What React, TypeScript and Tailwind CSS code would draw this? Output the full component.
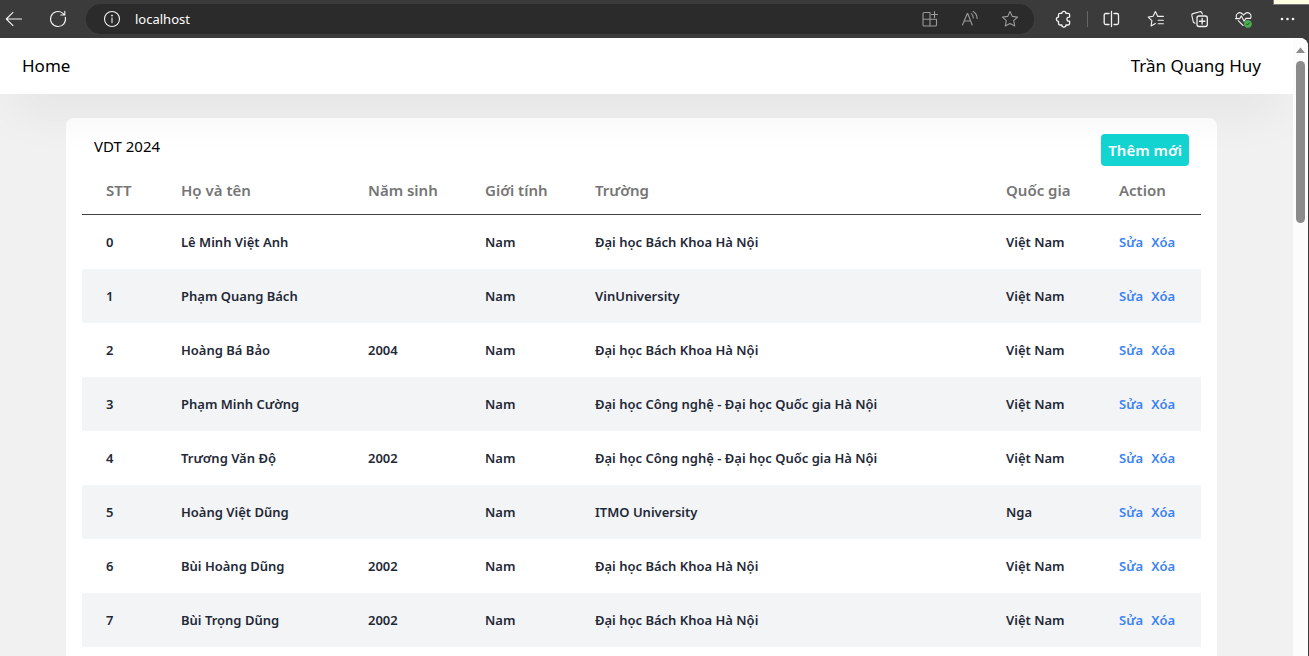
import React, { useState } from "react";

type Student = {
  id: number;
  name: string;
  year: string;
  gender: string;
  school: string;
  country: string;
};

const BK = "Đại học Bách Khoa Hà Nội";
const CN = "Đại học Công nghệ - Đại học Quốc gia Hà Nội";

const students: Student[] = [
  { id: 0, name: "Lê Minh Việt Anh", year: "", gender: "Nam", school: BK, country: "Việt Nam" },
  { id: 1, name: "Phạm Quang Bách", year: "", gender: "Nam", school: "VinUniversity", country: "Việt Nam" },
  { id: 2, name: "Hoàng Bá Bảo", year: "2004", gender: "Nam", school: BK, country: "Việt Nam" },
  { id: 3, name: "Phạm Minh Cường", year: "", gender: "Nam", school: CN, country: "Việt Nam" },
  { id: 4, name: "Trương Văn Độ", year: "2002", gender: "Nam", school: CN, country: "Việt Nam" },
  { id: 5, name: "Hoàng Việt Dũng", year: "", gender: "Nam", school: "ITMO University", country: "Nga" },
  { id: 6, name: "Bùi Hoàng Dũng", year: "2002", gender: "Nam", school: BK, country: "Việt Nam" },
  { id: 7, name: "Bùi Trọng Dũng", year: "2002", gender: "Nam", school: BK, country: "Việt Nam" },
];

const columns = [
  { label: "STT", width: "w-[75px]" },
  { label: "Họ và tên", width: "w-[187px]" },
  { label: "Năm sinh", width: "w-[117px]" },
  { label: "Giới tính", width: "w-[110px]" },
  { label: "Trường", width: "" },
  { label: "Quốc gia", width: "w-[113px]" },
  { label: "Action", width: "w-[106px]" },
];

function Icon({ children }: { children: React.ReactNode }) {
  return (
    <svg
      width="18"
      height="18"
      viewBox="0 0 18 18"
      fill="none"
      stroke="currentColor"
      strokeWidth="1.1"
      strokeLinecap="round"
      strokeLinejoin="round"
      aria-hidden="true"
      className="shrink-0"
    >
      {children}
    </svg>
  );
}

function ToolButton({ label, className, children }: { label: string; className: string; children: React.ReactNode }) {
  return (
    <button type="button" aria-label={label} className={`flex h-full shrink-0 items-center justify-center ${className}`}>
      <Icon>{children}</Icon>
    </button>
  );
}

function BrowserBar() {
  const [address, setAddress] = useState("localhost");
  return (
    <header className="relative flex h-[38px] shrink-0 items-center bg-[#3b3b3b] text-[#f2f2f2]">
      <ToolButton label="Back" className="w-7">
        <path d="M16.5 9H1.5M8 2.3L1.3 9L8 15.7" />
      </ToolButton>
      <ToolButton label="Refresh" className="ml-2 w-11">
        <path d="M16.3 7.2A7.5 7.5 0 1 1 13.6 3.1L15.6 4.8M15.8 1.2V5H11.8" />
      </ToolButton>
      <div className="mr-[7px] ml-[6px] flex h-[30px] min-w-0 flex-1 items-center rounded-full bg-[#2b2b2b] pr-1 pl-[17px]">
        <Icon>
          <circle cx="9" cy="9" r="7.5" />
          <path d="M9 8V12.6" />
          <circle cx="9" cy="5.6" r="0.4" fill="currentColor" />
        </Icon>
        <input
          type="text"
          aria-label="Address"
          value={address}
          onChange={(e) => setAddress(e.target.value)}
          className="ml-[14px] min-w-0 flex-1 bg-transparent text-[13px] leading-5 text-white outline-none"
        />
        <div className="flex h-full text-[#9a9a9a]">
          <ToolButton label="Apps" className="w-10">
            <path d="M9 2.5H3.3A1.3 1.3 0 0 0 2 3.8V14.7A1.3 1.3 0 0 0 3.3 16H14.2A1.3 1.3 0 0 0 15.5 14.7V9.3H2M9 2.5V16M13.5 1.5V7.5M10.5 4.5H16.5" />
          </ToolButton>
          <ToolButton label="Read aloud" className="w-10">
            <path d="M1.5 15L6.3 3.5H6.7L11.2 15M3.2 11H9.6M10.3 3.6Q12.2 5 12.3 8M12.2 1.5Q16 3.8 16.1 8.5" />
          </ToolButton>
          <ToolButton label="Add to favorites" className="w-10">
            <path d="M9 1.6L11.3 6.4L16.5 7.1L12.7 10.7L13.7 15.9L9 13.4L4.3 15.9L5.3 10.7L1.5 7.1L6.7 6.4Z" />
          </ToolButton>
        </div>
      </div>
      <ToolButton label="Extensions" className="w-11">
        <path
          strokeWidth="1.3"
          d="M5.9 3.4H7.8A2.1 2.1 0 0 1 12 3.4H14.2Q15.6 3.4 15.6 4.8V7.1H15A2 2 0 0 0 15 11.2H15.6V13.6Q15.6 15 14.2 15H12A2.1 2.1 0 0 1 7.8 15H5.9Q4.5 15 4.5 13.6V11.3A2.1 2.1 0 0 1 4.5 7.1V4.8Q4.5 3.4 5.9 3.4Z"
        />
      </ToolButton>
      <div className="flex w-1 shrink-0 justify-center">
        <span className="h-4 w-px bg-[#666666]" />
      </div>
      <ToolButton label="Split screen" className="w-11">
        <path strokeWidth="1.3" d="M7 3.5H3.7A1.5 1.5 0 0 0 2.2 5V13A1.5 1.5 0 0 0 3.7 14.5H7M12 3.5H15A1.5 1.5 0 0 1 16.5 5V13A1.5 1.5 0 0 1 15 14.5H12M9.5 1.5V16.5" />
      </ToolButton>
      <ToolButton label="Favorites" className="w-11">
        <path d="M11.8 6.4H17.4M11.8 6.4L9.4 1.6L7.1 6.3L2.2 7.1L5.9 10.7L5.1 15.9L9.4 13.6M12.2 10.2H17.4M12.2 13.7H17.4" />
      </ToolButton>
      <ToolButton label="Collections" className="w-11">
        <path d="M5 13.2L4.1 12.7Q3.4 12.3 3.2 11.5L1.8 5.3Q1.6 4 2.9 3.6L9.8 1.7Q11.1 1.4 11.7 2.5L12.4 4" />
        <rect x="7" y="6" width="10.3" height="10.5" rx="2" strokeWidth="1.3" />
        <path strokeWidth="1.3" d="M12.15 8.5V14M9.4 11.25H14.9" />
      </ToolButton>
      <ToolButton label="Browser essentials" className="w-11">
        <path d="M2.8 8.3C0.8 4.3 5.3 0.4 9 4.4L9.5 5.1L10.2 4.4C13.8 0.5 18.3 4.2 16.6 8.1M4.2 10.6L9.1 15.5M1.5 8.6H5.7L7.4 5.9L10.1 11.3L11.9 8.4H16.5" />
        <circle cx="13.9" cy="13.9" r="3.6" fill="#4caf50" stroke="#4caf50" strokeWidth="0.6" />
        <path d="M12.4 14L13.4 15L15.6 12.8" stroke="#24512a" strokeWidth="1" />
      </ToolButton>
      <ToolButton label="Settings and more" className="w-11">
        <g fill="currentColor" stroke="none">
          <circle cx="4" cy="9" r="1.3" />
          <circle cx="9.5" cy="9" r="1.3" />
          <circle cx="15" cy="9" r="1.3" />
        </g>
      </ToolButton>
      <div className="absolute top-0 right-0 h-[5px] w-9 border-b border-l border-[#777777] bg-[#ffffe1]" />
    </header>
  );
}

function Scrollbar() {
  return (
    <div className="flex w-[15px] shrink-0 flex-col items-center bg-[#fcfcfc] pt-[9px]" aria-hidden="true">
      <svg width="9" height="6" viewBox="0 0 9 6" className="shrink-0">
        <path d="M4.5 0.4L9 6H0Z" fill="#8b8b8b" />
      </svg>
      <div className="mt-2 h-[162px] w-[9px] rounded-full bg-[#8b8b8b]" />
    </div>
  );
}

export default function App() {
  return (
    <div className="flex h-screen flex-col overflow-hidden bg-[#3b3b3b] font-['Segoe_UI','Noto_Sans',sans-serif]">
      <BrowserBar />
      <div className="mr-px flex min-h-0 flex-1 overflow-hidden rounded-tr-lg bg-white">
        <div className="flex min-w-0 flex-1 flex-col overflow-hidden bg-[#f1f1f1]">
          <nav className="relative z-10 flex h-14 shrink-0 items-center justify-between bg-white pr-8 pl-[22px] text-[17px] text-black shadow-[0_25px_50px_-12px_rgba(0,0,0,0.08)]">
            <a href="#home">Home</a>
            <a href="#profile">Trần Quang Huy</a>
          </nav>
          <main className="flex min-h-0 flex-1 flex-col pt-6 pr-[76px] pl-[66px]">
            <section className="flex-1 rounded-t-lg bg-white px-4 pt-4">
              <div className="flex h-8 items-start justify-between px-3">
                <h1 className="text-[15px] leading-6 text-black">VDT 2024</h1>
                <button type="button" className="h-8 rounded bg-[#13d4d1] px-[7px] text-[15px] font-semibold text-white">
                  Thêm mới
                </button>
              </div>
              <table className="w-full table-fixed border-separate border-spacing-0 text-left">
                <thead>
                  <tr className="h-[49px] text-[15px] text-[#757575]">
                    {columns.map((c) => (
                      <th key={c.label} scope="col" className={`border-b border-[#3f3f46] pl-6 font-semibold whitespace-nowrap ${c.width}`}>
                        {c.label}
                      </th>
                    ))}
                  </tr>
                </thead>
                <tbody className="text-[13px] leading-5 font-semibold text-[#1f2937]">
                  {students.map((s) => (
                    <tr key={s.id} className="h-[54px] whitespace-nowrap even:bg-[#f3f4f6]">
                      <td className="pl-6">{s.id}</td>
                      <td className="pl-6">{s.name}</td>
                      <td className="pl-6">{s.year}</td>
                      <td className="pl-6">{s.gender}</td>
                      <td className="pl-6">{s.school}</td>
                      <td className="pl-6">{s.country}</td>
                      <td className="pl-6">
                        <div className="flex gap-2 text-[#3b82f6]">
                          <button type="button">Sửa</button>
                          <button type="button">Xóa</button>
                        </div>
                      </td>
                    </tr>
                  ))}
                </tbody>
              </table>
            </section>
          </main>
        </div>
        <Scrollbar />
      </div>
    </div>
  );
}
